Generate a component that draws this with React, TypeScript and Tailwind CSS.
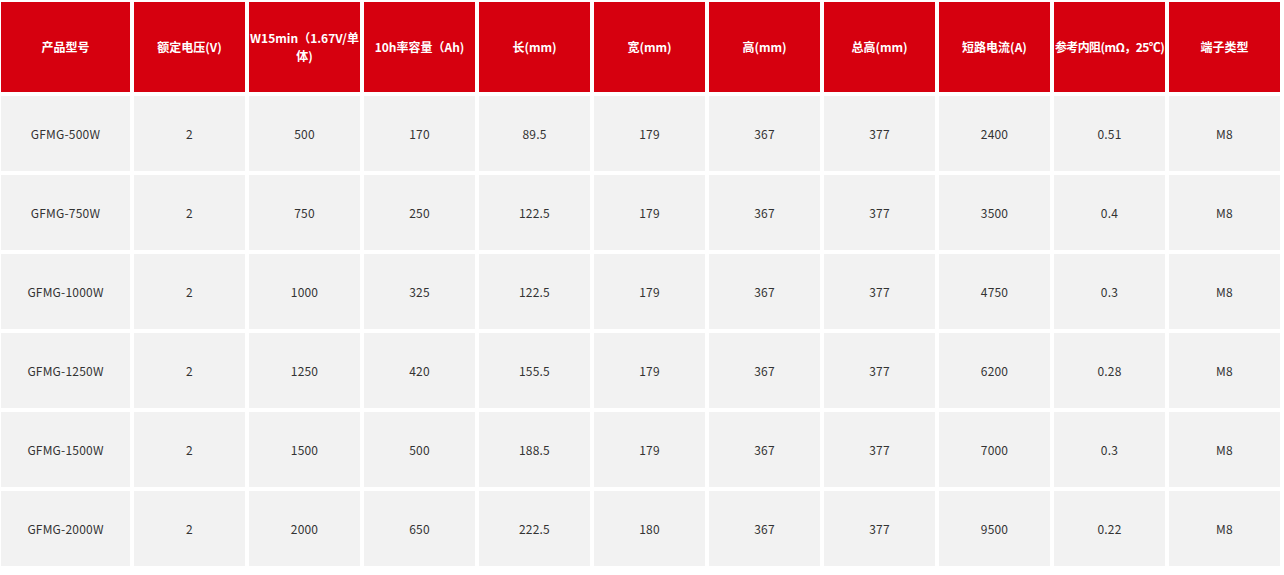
import React from "react";

const headers = [
  "产品型号",
  "额定电压(V)",
  "W15min（1.67V/单体)",
  "10h率容量（Ah)",
  "长(mm)",
  "宽(mm)",
  "高(mm)",
  "总高(mm)",
  "短路电流(A)",
  "参考内阻(mΩ，25℃)",
  "端子类型",
];

const rows = [
  ["GFMG-500W", "2", "500", "170", "89.5", "179", "367", "377", "2400", "0.51", "M8"],
  ["GFMG-750W", "2", "750", "250", "122.5", "179", "367", "377", "3500", "0.4", "M8"],
  ["GFMG-1000W", "2", "1000", "325", "122.5", "179", "367", "377", "4750", "0.3", "M8"],
  ["GFMG-1250W", "2", "1250", "420", "155.5", "179", "367", "377", "6200", "0.28", "M8"],
  ["GFMG-1500W", "2", "1500", "500", "188.5", "179", "367", "377", "7000", "0.3", "M8"],
  ["GFMG-2000W", "2", "2000", "650", "222.5", "180", "367", "377", "9500", "0.22", "M8"],
];

export default function App() {
  return (
    <div
      className="w-[1284px] h-[575px] bg-white pl-[1px] pt-[2px]"
      style={{ fontFamily: '"Noto Sans CJK SC", "Noto Sans", sans-serif' }}
    >
      <div className="grid grid-cols-[129px_repeat(10,111px)] grid-rows-[90px_repeat(6,75px)] gap-[4px]">
        {headers.map((h, i) => (
          <div
            key={"h" + i}
            className="bg-[#d6000f] text-white font-bold text-[12px] leading-[18px] flex items-center justify-center text-center"
          >
            {i === 9 ? (
              <span className="whitespace-nowrap tracking-[-0.6px]">{h}</span>
            ) : (
              h
            )}
          </div>
        ))}
        {rows.map((r, ri) =>
          r.map((c, ci) => (
            <div
              key={ri + "-" + ci}
              className="bg-[#f2f2f2] text-[#333333] text-[12px] tracking-[0.2px] flex items-center justify-center text-center"
            >
              {c}
            </div>
          ))
        )}
      </div>
    </div>
  );
}
